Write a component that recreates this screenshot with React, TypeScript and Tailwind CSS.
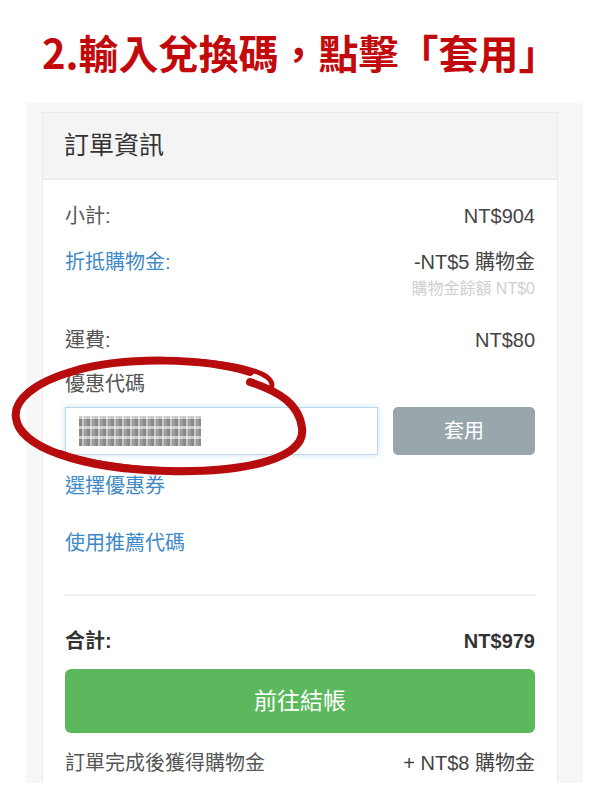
import React from 'react'

const FONT = "font-['Liberation_Sans','Noto_Sans_CJK_TC',sans-serif]"

function Row({ label, value, labelClass = 'text-[#555]', valueClass = 'text-[#444]', className = '' }: {
  label: string
  value: string
  labelClass?: string
  valueClass?: string
  className?: string
}) {
  return (
    <div className={`flex items-center justify-between h-[28px] text-[20px] leading-[28px] ${className}`}>
      <span className={labelClass}>{label}</span>
      <span className={valueClass}>{value}</span>
    </div>
  )
}

function RedCircle() {
  // hand drawn marker ring round the coupon input
  return (
    <svg className="absolute left-0 top-0 pointer-events-none" width="600" height="800" viewBox="0 0 600 800">
      <path
        d="M250 372 C205 358 125 356 74 371 C35 382 13 400 16 418 C19 446 78 469 168 471 C250 473 306 457 302 428 C299 404 280 392 250 382"
        fill="none"
        stroke="#b70c0e"
        strokeWidth="8"
        strokeLinecap="round"
      />
      <path
        d="M140 361 C195 358 240 364 262 374 C272 379 274 385 270 390"
        fill="none"
        stroke="#b70c0e"
        strokeWidth="5"
        strokeLinecap="round"
      />
      <path
        d="M60 452 C110 470 200 475 262 463"
        fill="none"
        stroke="#b70c0e"
        strokeWidth="4"
        strokeLinecap="round"
      />
    </svg>
  )
}

export default function App() {
  return (
    <div className={`relative w-[600px] h-[800px] bg-white overflow-hidden ${FONT}`}>
      <div className="h-[103px] pl-[42px] pt-[29px]">
        <h1 className="text-[40px] leading-[46px] font-bold text-[#c20a0c] font-['Noto_Sans_CJK_TC',sans-serif] whitespace-nowrap">
          2.輸入兌換碼，點擊「套用」
        </h1>
      </div>

      <div className="ml-[26px] w-[557px] h-[680px] bg-[#f7f7f7] pl-[16px] pr-[25px] pt-[9px]">
        <div className="h-full bg-white border border-[#ebebeb] border-b-0 flex flex-col">
          <div className="h-[67px] bg-[#f4f4f4] border-b border-[#e9e9e9] flex items-center pl-[21px]">
            <span className="text-[25px] text-[#333]">訂單資訊</span>
          </div>

          <div className="px-[22px] pt-[22px]">
            <Row label="小計:" value="NT$904" />
            <Row label="折抵購物金:" value="-NT$5 購物金" labelClass="text-[#3f8ac6]" className="mt-[18px]" />
            <div className="mt-[3px] text-right text-[16px] leading-[20px] text-[#cfcfcf]">購物金餘額 NT$0</div>
            <Row label="運費:" value="NT$80" className="mt-[27px]" />
            <div className="mt-[16px] text-[20px] leading-[28px] text-[#555]">優惠代碼</div>

            <div className="mt-[9px] flex gap-[15px] h-[48px]">
              <div className="w-[313px] h-[48px] border border-[#bcd6ea] shadow-[0_0_6px_rgba(102,175,233,0.35)] flex items-center pl-[13px]">
                <div className="w-[122px] h-[30px] opacity-80 blur-[0.7px] bg-[repeating-linear-gradient(90deg,#6e6e6e_0_3px,#b8b8b8_3px_5px,#858585_5px_8px)]">
                  <div className="w-full h-full bg-[repeating-linear-gradient(0deg,transparent_0_7px,rgba(255,255,255,0.55)_7px_10px)]" />
                </div>
              </div>
              <button className="flex-1 h-[48px] rounded-[5px] bg-[#99a7ac] text-white text-[20px]">套用</button>
            </div>

            <div className="mt-[17px] text-[20px] leading-[28px] text-[#3f8ac6]">選擇優惠券</div>
            <div className="mt-[29px] text-[20px] leading-[28px] text-[#3f8ac6]">使用推薦代碼</div>

            <div className="mt-[37px] h-[2px] bg-[#efefef]" />

            <Row label="合計:" value="NT$979" labelClass="text-[#333] font-bold" valueClass="text-[#333] font-bold" className="mt-[31px]" />

            <button className="mt-[14px] w-full h-[64px] rounded-[6px] bg-[#5cb85c] text-white text-[23px]">前往結帳</button>

            <Row label="訂單完成後獲得購物金" value="+ NT$8 購物金" className="mt-[16px]" />
          </div>
        </div>
      </div>

      <RedCircle />
    </div>
  )
}
